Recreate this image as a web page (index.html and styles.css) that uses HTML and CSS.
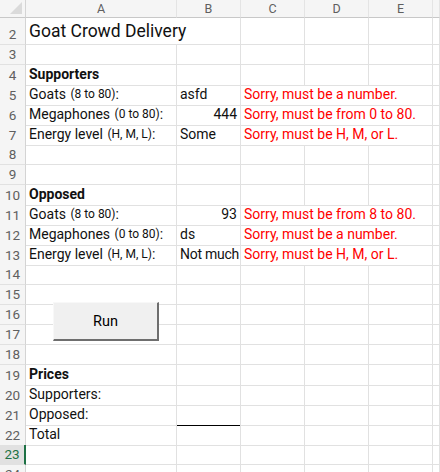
FILE: index.html
```html
<!DOCTYPE html>
<html>
<head>
<meta charset="utf-8">
<link rel="stylesheet" href="styles.css">
</head>
<body>
<div class="sheet">
  <div class="row head">
    <div class="rh corner"><span class="tri"></span></div>
    <div class="ch">A</div><div class="ch">B</div><div class="ch">C</div><div class="ch">D</div><div class="ch">E</div><div class="ch"></div>
  </div>
  <div class="row tall">
    <div class="rh">2</div>
    <div class="c span2 title">Goat Crowd Delivery</div>
    <div class="c"></div><div class="c"></div><div class="c"></div><div class="c"></div>
  </div>
  <div class="row"><div class="rh">3</div><div class="c"></div><div class="c"></div><div class="c"></div><div class="c"></div><div class="c"></div><div class="c"></div></div>
  <div class="row"><div class="rh">4</div><div class="c bold">Supporters</div><div class="c"></div><div class="c"></div><div class="c"></div><div class="c"></div><div class="c"></div></div>
  <div class="row"><div class="rh">5</div><div class="c">Goats&nbsp;<small>(8 to 80)</small>:</div><div class="c clip">asfd</div><div class="c span3 err">Sorry, must be a number.</div><div class="c"></div></div>
  <div class="row"><div class="rh">6</div><div class="c">Megaphones&nbsp;<small>(0 to 80)</small>:</div><div class="c clip num">444</div><div class="c span3 err">Sorry, must be from 0 to 80.</div><div class="c"></div></div>
  <div class="row"><div class="rh">7</div><div class="c">Energy level&nbsp;<small>(H, M, L)</small>:</div><div class="c clip">Some</div><div class="c span3 err">Sorry, must be H, M, or L.</div><div class="c"></div></div>
  <div class="row"><div class="rh">8</div><div class="c"></div><div class="c"></div><div class="c"></div><div class="c"></div><div class="c"></div><div class="c"></div></div>
  <div class="row"><div class="rh">9</div><div class="c"></div><div class="c"></div><div class="c"></div><div class="c"></div><div class="c"></div><div class="c"></div></div>
  <div class="row"><div class="rh">10</div><div class="c bold">Opposed</div><div class="c"></div><div class="c"></div><div class="c"></div><div class="c"></div><div class="c"></div></div>
  <div class="row"><div class="rh">11</div><div class="c">Goats&nbsp;<small>(8 to 80)</small>:</div><div class="c clip num">93</div><div class="c span3 err">Sorry, must be from 8 to 80.</div><div class="c"></div></div>
  <div class="row"><div class="rh">12</div><div class="c">Megaphones&nbsp;<small>(0 to 80)</small>:</div><div class="c clip">ds</div><div class="c span3 err">Sorry, must be a number.</div><div class="c"></div></div>
  <div class="row"><div class="rh">13</div><div class="c">Energy level&nbsp;<small>(H, M, L)</small>:</div><div class="c clip tight">Not much</div><div class="c span3 err">Sorry, must be H, M, or L.</div><div class="c"></div></div>
  <div class="row"><div class="rh">14</div><div class="c"></div><div class="c"></div><div class="c"></div><div class="c"></div><div class="c"></div><div class="c"></div></div>
  <div class="row"><div class="rh">15</div><div class="c"></div><div class="c"></div><div class="c"></div><div class="c"></div><div class="c"></div><div class="c"></div></div>
  <div class="row"><div class="rh">16</div><div class="c"></div><div class="c"></div><div class="c"></div><div class="c"></div><div class="c"></div><div class="c"></div></div>
  <div class="row"><div class="rh">17</div><div class="c"></div><div class="c"></div><div class="c"></div><div class="c"></div><div class="c"></div><div class="c"></div></div>
  <div class="row"><div class="rh">18</div><div class="c"></div><div class="c"></div><div class="c"></div><div class="c"></div><div class="c"></div><div class="c"></div></div>
  <div class="row"><div class="rh">19</div><div class="c bold">Prices</div><div class="c"></div><div class="c"></div><div class="c"></div><div class="c"></div><div class="c"></div></div>
  <div class="row"><div class="rh">20</div><div class="c">Supporters:</div><div class="c"></div><div class="c"></div><div class="c"></div><div class="c"></div><div class="c"></div></div>
  <div class="row"><div class="rh">21</div><div class="c">Opposed:</div><div class="c bb"></div><div class="c"></div><div class="c"></div><div class="c"></div><div class="c"></div></div>
  <div class="row"><div class="rh">22</div><div class="c">Total</div><div class="c"></div><div class="c"></div><div class="c"></div><div class="c"></div><div class="c"></div></div>
  <div class="row"><div class="rh sel">23</div><div class="c"></div><div class="c"></div><div class="c"></div><div class="c"></div><div class="c"></div><div class="c"></div></div>
  <div class="row"><div class="rh">24</div><div class="c"></div><div class="c"></div><div class="c"></div><div class="c"></div><div class="c"></div><div class="c"></div></div>
  <button class="run">Run</button>
</div>
</body>
</html>
```
FILE: styles.css
```css
html, body {
  margin: 0;
  padding: 0;
  background: #fff;
  overflow: hidden;
}
.sheet {
  position: relative;
  width: 440px;
  height: 472px;
  overflow: hidden;
  font-family: Roboto, "Liberation Sans", sans-serif;
  font-size: 14px;
  color: #111;
}
.row {
  display: grid;
  grid-template-columns: 26px 151px 64px 64px 64px 64px 1fr;
  height: 20px;
}
.row.head { height: 18px; }
.row.tall { height: 27px; }
.c, .rh, .ch {
  box-sizing: border-box;
  border-right: 1px solid #e1e1e1;
  border-bottom: 1px solid #e1e1e1;
  white-space: nowrap;
  display: flex;
  align-items: flex-end;
  min-width: 0;
}
.c {
  padding: 0 3px 2px 3px;
  line-height: 18px;
}
.clip { overflow: hidden; }
.tight { letter-spacing: -0.25px; padding-left: 3px; padding-right: 0; }
.num { justify-content: flex-end; }
.span2 { grid-column: span 2; }
.span3 { grid-column: span 3; }
.bold { font-weight: bold; }
.err { color: #ff0000; }
small { font-size: 12px; margin-left: 1px; }
.title {
  font-size: 17.5px;
  line-height: 24px;
  padding-bottom: 1px;
}
.bb { border-bottom: 1px solid #000; }
.rh {
  background: #f5f5f5;
  color: #5f5f5f;
  justify-content: center;
  font-size: 13.5px;
  line-height: 18px;
  padding-bottom: 1px;
  border-right: 1px solid #d4d4d4;
  border-bottom: 1px solid #e1e1e1;
}
.rh.sel {
  background: #e1e1e1;
  color: #1e7145;
  border-right: 2px solid #1e7145;
}
.head .ch {
  background: #f5f5f5;
  color: #5f5f5f;
  justify-content: center;
  align-items: center;
  font-size: 12.5px;
  border-bottom: 1px solid #c8c8c8;
  border-right: 1px solid #e4e4e4;
}
.corner {
  position: relative;
  border-bottom: 1px solid #c8c8c8;
}
.tri {
  position: absolute;
  right: 3px;
  bottom: 3px;
  width: 0;
  height: 0;
  border-left: 12px solid transparent;
  border-bottom: 12px solid #dadada;
}
.run {
  position: absolute;
  left: 53px;
  top: 302px;
  width: 106px;
  height: 39px;
  box-sizing: border-box;
  background: #f0f0f0;
  border: none;
  border-top: 1px solid #f8f8f8;
  border-left: 1px solid #f8f8f8;
  border-right: 2px solid #6e6e6e;
  border-bottom: 2px solid #6e6e6e;
  font-family: Roboto, "Liberation Sans", sans-serif;
  font-size: 14.5px;
  color: #000;
  padding: 0;
}
```
